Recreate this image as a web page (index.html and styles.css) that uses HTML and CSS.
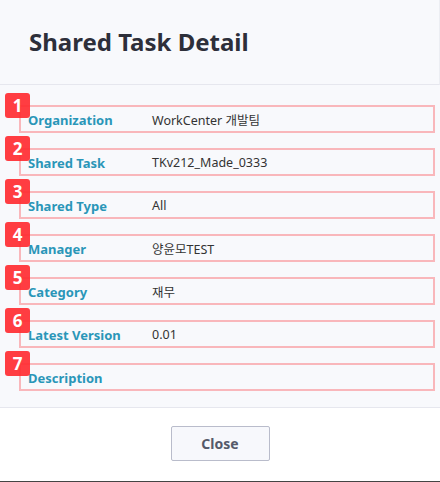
FILE: index.html
```html
<html>
<head>
    <meta charset="UTF-8">
    <title>Shared Task Detail</title>
    <link rel="stylesheet" href="styles.css">
</head>
<body>
    <div id="dialogo">
        <div id="cabecera">
            <h1 id="titulo">Shared Task Detail</h1>
        </div>

        <div id="cuerpo">
            <div class="fila">
                <span class="numero">1</span>
                <span class="etiqueta">Organization</span>
                <span class="valor">WorkCenter 개발팀</span>
            </div>
            <div class="fila">
                <span class="numero">2</span>
                <span class="etiqueta">Shared Task</span>
                <span class="valor">TKv212_Made_0333</span>
            </div>
            <div class="fila">
                <span class="numero">3</span>
                <span class="etiqueta">Shared Type</span>
                <span class="valor">All</span>
            </div>
            <div class="fila">
                <span class="numero">4</span>
                <span class="etiqueta">Manager</span>
                <span class="valor">양윤모TEST</span>
            </div>
            <div class="fila">
                <span class="numero">5</span>
                <span class="etiqueta">Category</span>
                <span class="valor">재무</span>
            </div>
            <div class="fila">
                <span class="numero">6</span>
                <span class="etiqueta">Latest Version</span>
                <span class="valor">0.01</span>
            </div>
            <div class="fila">
                <span class="numero">7</span>
                <span class="etiqueta">Description</span>
                <span class="valor"></span>
            </div>
        </div>

        <div id="pie">
            <button id="cerrar" type="button">Close</button>
        </div>
    </div>
</body>
</html>
```

FILE: styles.css
```css
body {
    margin: 0;
    font-family: "Noto Sans", "Noto Sans CJK KR", sans-serif;
    background-color: white;
}

#dialogo {
    width: 440px;
    height: 482px;
    box-sizing: border-box;
    border-bottom: 1px solid #444;
    background-color: white;
}

#cabecera {
    height: 85px;
    box-sizing: border-box;
    background-color: #f8f9fc;
    border-bottom: 1px solid #e6e7ee;
    border-right: 1px solid #eceef3;
    display: flex;
    align-items: center;
    padding-left: 29px;
    padding-bottom: 2px;
}

#titulo {
    margin: 0;
    font-size: 24px;
    font-weight: bold;
    color: #2d2f3a;
}

#cuerpo {
    background-color: #f8f9fc;
    border-bottom: 1px solid #e6e7ee;
    padding: 20px 5px 16px 19px;
    display: flex;
    flex-direction: column;
    gap: 15px;
}

.fila {
    position: relative;
    height: 28px;
    box-sizing: border-box;
    border: 2px solid #f9b7bb;
    display: flex;
    align-items: center;
    padding-left: 7px;
    padding-top: 1px;
    font-size: 13px;
}

.numero {
    position: absolute;
    left: -16px;
    top: -14px;
    width: 25px;
    height: 25px;
    border-radius: 3px;
    background-color: rgba(255, 45, 50, 0.92);
    color: white;
    font-weight: bold;
    font-size: 17px;
    display: flex;
    align-items: center;
    justify-content: center;
}

.etiqueta {
    width: 124px;
    font-weight: bold;
    color: #2a96b8;
}

.valor {
    color: #333;
    font-size: 12.5px;
}

#pie {
    display: flex;
    justify-content: center;
    padding-top: 18px;
}

#cerrar {
    width: 99px;
    height: 35px;
    background-color: #f7f8fc;
    border: 1px solid #b9bccb;
    border-radius: 2px;
    font-family: "Noto Sans", sans-serif;
    font-size: 14px;
    font-weight: bold;
    color: #555a6a;
}
```
